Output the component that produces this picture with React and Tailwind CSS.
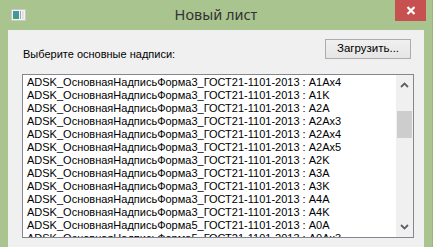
import React from "react";

const rows = [
  ["3", "A1Ax4"],
  ["3", "A1K"],
  ["3", "A2A"],
  ["3", "A2Ax3"],
  ["3", "A2Ax4"],
  ["3", "A2Ax5"],
  ["3", "A2K"],
  ["3", "A3A"],
  ["3", "A3K"],
  ["3", "A4A"],
  ["3", "A4K"],
  ["5", "A0A"],
  ["5", "A0Ax3"],
];

function WindowIcon() {
  return (
    <svg width="15" height="12" viewBox="0 0 15 12">
      <rect x="0.5" y="0.5" width="14" height="11" fill="#f4f4f4" stroke="#c8c8c8" />
      <defs>
        <linearGradient id="g" x1="0" y1="0" x2="0" y2="1">
          <stop offset="0" stopColor="#4a90b8" />
          <stop offset="1" stopColor="#3aa070" />
        </linearGradient>
      </defs>
      <rect x="2" y="2" width="6" height="8" fill="url(#g)" />
      <rect x="9" y="2" width="1" height="8" fill="#9aa7b0" />
      <rect x="11" y="2" width="2" height="8" fill="#dfe3e6" />
    </svg>
  );
}

function Chevron({ down }) {
  return (
    <svg width="9" height="6" viewBox="0 0 9 6">
      <path
        d={down ? "M1 1 L4.5 4.5 L8 1" : "M1 5 L4.5 1.5 L8 5"}
        fill="none"
        stroke="#606060"
        strokeWidth="1.8"
      />
    </svg>
  );
}

export default function App() {
  return (
    <div className="w-[433px] h-[247px] bg-[#aac48f] flex flex-col overflow-hidden border-r border-[#9bb580] font-['Liberation_Sans',sans-serif]">
      {/* Title bar */}
      <div className="h-[30px] grid grid-cols-[1fr_auto_1fr] items-start shrink-0">
        <div className="pl-[11px] pt-[9px] flex">
          <WindowIcon />
        </div>
        <div className="pt-[4px] text-[14.5px] text-[#333333] font-['Noto_Sans',sans-serif]">Новый лист</div>
        <div className="flex justify-end pr-[6px]">
          <button className="w-[31px] h-[21px] bg-[#c75050] flex items-center justify-center">
            <svg width="10" height="9" viewBox="0 0 10 9">
              <path d="M1.5 1 L8.5 8 M8.5 1 L1.5 8" stroke="#ffffff" strokeWidth="2.2" />
            </svg>
          </button>
        </div>
      </div>

      {/* Client area */}
      <div className="mx-[8px] flex-1 bg-[#f0f0f0] flex flex-col pl-[14px] pr-[10px] pt-[9px]">
        <div className="flex items-start justify-between pr-[3px]">
          <span className="pl-[1px] pt-[8px] text-[11px] text-black leading-[14px]">
            Выберите основные надписи:
          </span>
          <button className="w-[86px] h-[20px] border border-[#acacac] bg-gradient-to-b from-[#f0f0f0] to-[#e5e5e5] text-[11.5px] text-black leading-none">
            Загрузить...
          </button>
        </div>

        <div className="mt-[13px] h-[164px] border border-[#828790] bg-white flex">
          <div className="flex-1 overflow-hidden pt-[1px] pl-[4px]">
            {rows.map(([f, s], i) => (
              <div key={i} className="h-[13px] leading-[13px] text-[11px] text-black whitespace-nowrap">
                ADSK_ОсновнаяНадписьФорма{f}_ГОСТ21-1101-2013 : {s}
              </div>
            ))}
          </div>
          <div className="w-[17px] bg-[#f0f0f0] flex flex-col items-center">
            <div className="h-[17px] w-full flex items-center justify-center pt-[2px]">
              <Chevron />
            </div>
            <div className="h-[19px]" />
            <div className="w-[15px] h-[27px] bg-[#cdcdcd]" />
            <div className="flex-1" />
            <div className="h-[17px] w-full flex items-center justify-center pb-[4px]">
              <Chevron down />
            </div>
          </div>
        </div>
      </div>
    </div>
  );
}
